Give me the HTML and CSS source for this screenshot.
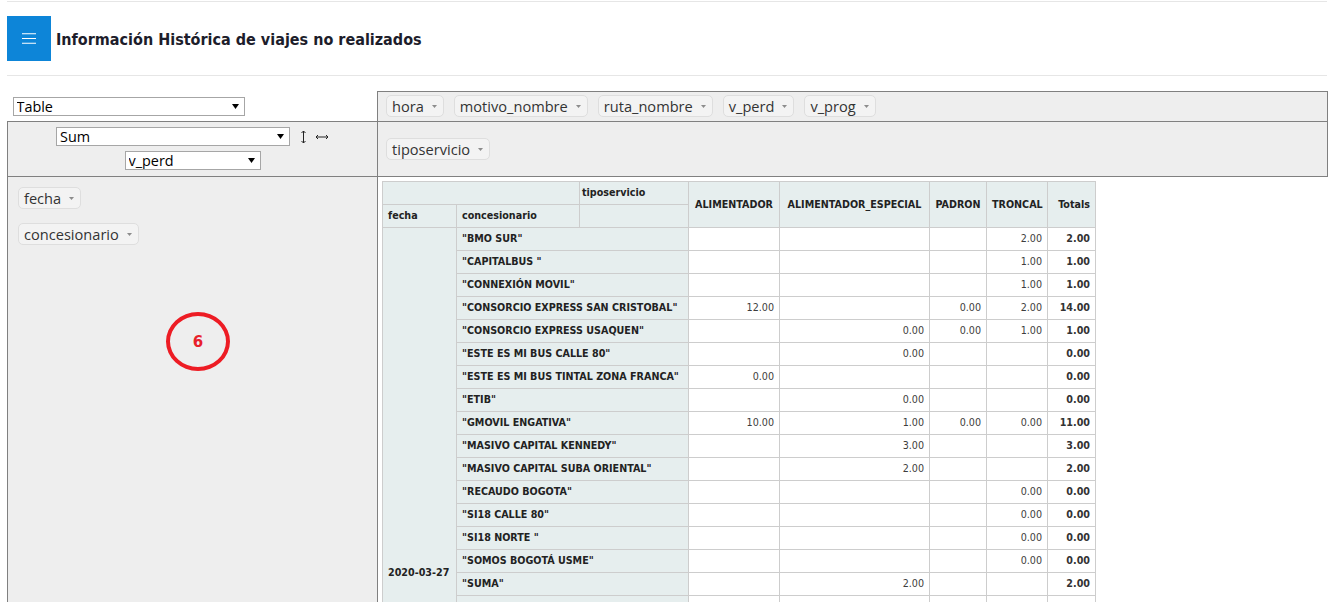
FILE: index.html
```html
<!DOCTYPE html>
<html lang="es">
<head>
<meta charset="utf-8">
<title>Información Histórica de viajes no realizados</title>
<link rel="stylesheet" href="styles.css">
</head>
<body>
<div class="page">
  <div class="rule rule-top"></div>
  <header class="head">
    <button class="menu-btn" type="button" aria-label="Menú">
      <svg width="14" height="11" viewBox="0 0 14 11"><path d="M0 0.75H14M0 5.5H14M0 10.25H14" stroke="#fff" stroke-width="1.2"/></svg>
    </button>
    <h1 class="title">Información Histórica de viajes no realizados</h1>
  </header>
  <div class="rule rule-mid"></div>

  <table class="pvtUi">
    <colgroup><col class="ui-c1"><col class="ui-c2"></colgroup>
    <tr class="ui-r1">
      <td class="pvtRenderer">
        <div class="sel sel-renderer"><select><option>Table</option></select><svg class="sel-arrow" viewBox="0 0 7 5"><path d="M0 0H7L3.5 5Z"/></svg></div>
      </td>
      <td class="axis pvtUnused">
        <ul class="chips horiz">
          <li class="chip">hora<svg class="tri" viewBox="0 0 5 3"><path d="M0 0H5L2.5 3Z"/></svg></li>
          <li class="chip">motivo_nombre<svg class="tri" viewBox="0 0 5 3"><path d="M0 0H5L2.5 3Z"/></svg></li>
          <li class="chip">ruta_nombre<svg class="tri" viewBox="0 0 5 3"><path d="M0 0H5L2.5 3Z"/></svg></li>
          <li class="chip">v_perd<svg class="tri" viewBox="0 0 5 3"><path d="M0 0H5L2.5 3Z"/></svg></li>
          <li class="chip">v_prog<svg class="tri" viewBox="0 0 5 3"><path d="M0 0H5L2.5 3Z"/></svg></li>
        </ul>
      </td>
    </tr>
    <tr class="ui-r2">
      <td class="axis pvtVals">
        <div class="vals">
          <div class="vals-line">
            <div class="sel sel-agg"><select><option>Sum</option></select><svg class="sel-arrow" viewBox="0 0 7 5"><path d="M0 0H7L3.5 5Z"/></svg></div>
            <svg class="order order-row" width="5" height="14" viewBox="0 0 5 14"><path d="M2.5 1V13M0.5 3L2.5 1L4.5 3M0.5 11L2.5 13L4.5 11" fill="none" stroke="#222" stroke-width="1"/></svg>
            <svg class="order order-col" width="14" height="6" viewBox="0 0 14 6"><path d="M1 3H13M3 1L1 3L3 5M11 1L13 3L11 5" fill="none" stroke="#222" stroke-width="1"/></svg>
          </div>
          <div class="sel sel-attr"><select><option>v_perd</option></select><svg class="sel-arrow" viewBox="0 0 7 5"><path d="M0 0H7L3.5 5Z"/></svg></div>
        </div>
      </td>
      <td class="axis pvtCols">
        <ul class="chips horiz">
          <li class="chip">tiposervicio<svg class="tri" viewBox="0 0 5 3"><path d="M0 0H5L2.5 3Z"/></svg></li>
        </ul>
      </td>
    </tr>
    <tr class="ui-r3">
      <td class="axis pvtRows">
        <div class="rows-inner">
          <ul class="chips vert">
            <li class="chip">fecha<svg class="tri" viewBox="0 0 5 3"><path d="M0 0H5L2.5 3Z"/></svg></li>
            <li class="chip">concesionario<svg class="tri" viewBox="0 0 5 3"><path d="M0 0H5L2.5 3Z"/></svg></li>
          </ul>
          <div class="mark">6</div>
        </div>
      </td>
      <td class="pvtRendererArea">
        <table class="pvtTable">
          <colgroup>
            <col class="k1"><col class="k2"><col class="k3"><col class="k4"><col class="k5"><col class="k6"><col class="k7"><col class="k8">
          </colgroup>
          <thead>
            <tr>
              <th colspan="2"></th>
              <th class="pvtAxisLabel lbl-ts">tiposervicio</th>
              <th class="pvtColLabel" rowspan="2">ALIMENTADOR</th>
              <th class="pvtColLabel" rowspan="2">ALIMENTADOR_ESPECIAL</th>
              <th class="pvtColLabel" rowspan="2">PADRON</th>
              <th class="pvtColLabel" rowspan="2">TRONCAL</th>
              <th class="pvtTotalLabel" rowspan="2">Totals</th>
            </tr>
            <tr>
              <th class="pvtAxisLabel">fecha</th>
              <th class="pvtAxisLabel">concesionario</th>
              <th></th>
            </tr>
          </thead>
          <tbody>
            <tr><th class="pvtRowLabel date" rowspan="17">2020-03-27</th><th class="pvtRowLabel" colspan="2">"BMO SUR"</th><td></td><td></td><td></td><td>2.00</td><td class="pvtTotal">2.00</td></tr>
            <tr><th class="pvtRowLabel" colspan="2">"CAPITALBUS "</th><td></td><td></td><td></td><td>1.00</td><td class="pvtTotal">1.00</td></tr>
            <tr><th class="pvtRowLabel" colspan="2">"CONNEXIÓN MOVIL"</th><td></td><td></td><td></td><td>1.00</td><td class="pvtTotal">1.00</td></tr>
            <tr><th class="pvtRowLabel" colspan="2">"CONSORCIO EXPRESS SAN CRISTOBAL"</th><td>12.00</td><td></td><td>0.00</td><td>2.00</td><td class="pvtTotal">14.00</td></tr>
            <tr><th class="pvtRowLabel" colspan="2">"CONSORCIO EXPRESS USAQUEN"</th><td></td><td>0.00</td><td>0.00</td><td>1.00</td><td class="pvtTotal">1.00</td></tr>
            <tr><th class="pvtRowLabel" colspan="2">"ESTE ES MI BUS CALLE 80"</th><td></td><td>0.00</td><td></td><td></td><td class="pvtTotal">0.00</td></tr>
            <tr><th class="pvtRowLabel" colspan="2">"ESTE ES MI BUS TINTAL ZONA FRANCA"</th><td>0.00</td><td></td><td></td><td></td><td class="pvtTotal">0.00</td></tr>
            <tr><th class="pvtRowLabel" colspan="2">"ETIB"</th><td></td><td>0.00</td><td></td><td></td><td class="pvtTotal">0.00</td></tr>
            <tr><th class="pvtRowLabel" colspan="2">"GMOVIL ENGATIVA"</th><td>10.00</td><td>1.00</td><td>0.00</td><td>0.00</td><td class="pvtTotal">11.00</td></tr>
            <tr><th class="pvtRowLabel" colspan="2">"MASIVO CAPITAL KENNEDY"</th><td></td><td>3.00</td><td></td><td></td><td class="pvtTotal">3.00</td></tr>
            <tr><th class="pvtRowLabel" colspan="2">"MASIVO CAPITAL SUBA ORIENTAL"</th><td></td><td>2.00</td><td></td><td></td><td class="pvtTotal">2.00</td></tr>
            <tr><th class="pvtRowLabel" colspan="2">"RECAUDO BOGOTA"</th><td></td><td></td><td></td><td>0.00</td><td class="pvtTotal">0.00</td></tr>
            <tr><th class="pvtRowLabel" colspan="2">"SI18 CALLE 80"</th><td></td><td></td><td></td><td>0.00</td><td class="pvtTotal">0.00</td></tr>
            <tr><th class="pvtRowLabel" colspan="2">"SI18 NORTE "</th><td></td><td></td><td></td><td>0.00</td><td class="pvtTotal">0.00</td></tr>
            <tr><th class="pvtRowLabel" colspan="2">"SOMOS BOGOTÁ USME"</th><td></td><td></td><td></td><td>0.00</td><td class="pvtTotal">0.00</td></tr>
            <tr><th class="pvtRowLabel" colspan="2">"SUMA"</th><td></td><td>2.00</td><td></td><td></td><td class="pvtTotal">2.00</td></tr>
            <tr><th class="pvtRowLabel" colspan="2">&nbsp;</th><td></td><td></td><td></td><td></td><td class="pvtTotal"></td></tr>
          </tbody>
        </table>
      </td>
    </tr>
  </table>
</div>
</body>
</html>
```

FILE: styles.css
```css
* { box-sizing: border-box; }
html, body { margin: 0; padding: 0; background: #fff; }
body { font-family: "Open Sans", "DejaVu Sans", sans-serif; color: #333; }

.page { width: 1327px; padding-left: 7px; }

.rule { height: 1px; background: #e6e6e6; }
.rule-top { margin-top: 1px; }
.rule-mid { margin-top: 14px; }

.head { display: flex; align-items: center; margin-top: 14px; height: 45px; }
.menu-btn {
  width: 44px; height: 45px; padding: 0; border: 0;
  background: #0d85d8;
  display: flex; align-items: center; justify-content: center;
}
.title {
  margin: 1px 0 0 5px;
  font-family: "DejaVu Sans Condensed", "DejaVu Sans", sans-serif;
  font-stretch: condensed;
  font-weight: bold; font-size: 16px;
  color: #1d1d2b;
}

/* pivot UI */
.pvtUi { margin-top: 15px; border-collapse: collapse; table-layout: fixed; width: 1320px; color: #333; }
.ui-c1 { width: 370px; }
.ui-c2 { width: 950px; }
.pvtUi > tbody > tr > td { padding: 0; vertical-align: top; }
.axis { border: 1px solid gray; background: #eee; }

.ui-r1 > td { height: 30px; }
.pvtRenderer { padding: 0 0 0 5px !important; vertical-align: middle !important; }
.pvtUnused { padding: 3px 8px 0 !important; }

.ui-r2 > td { height: 55px; }
.pvtVals { padding: 5px 0 0 !important; }
.pvtCols { padding: 16px 8px 0 !important; }

.pvtRows { padding: 10px 10px 0 !important; }
.rows-inner { position: relative; height: 430px; }

.chips { list-style: none; margin: 0; padding: 0; display: flex; }
.chips.horiz { gap: 10px; }
.chips.vert { flex-direction: column; align-items: flex-start; gap: 14px; }
.chip {
  display: inline-flex; align-items: center;
  height: 22px; padding: 0 6px 0 5px;
  background: #f3f3f3; border: 1px solid #dedede; border-radius: 5px;
  font-size: 14.6px; line-height: 16px; color: #333; white-space: nowrap;
}
.tri { width: 5px; height: 3px; margin-left: 8px; fill: #8c8c8c; }

/* selects */
.sel {
  display: inline-flex; align-items: center;
  height: 19px; border: 1px solid #a6a6a6; background: #fff;
}
.sel select {
  -webkit-appearance: none; appearance: none;
  border: 0; background: transparent; outline: none;
  flex: 1; min-width: 0; height: 17px; padding: 0 0 0 3px; margin: 0;
  font-family: "Open Sans", sans-serif; font-size: 14.4px; line-height: 17px; color: #000;
}
.sel-arrow { width: 7px; height: 5px; margin-right: 5px; fill: #000; flex: none; }
.sel-renderer { width: 232px; }
.sel-agg { width: 234px; }
.sel-attr { width: 136px; }

.vals { display: flex; flex-direction: column; align-items: center; gap: 5px; }
.vals-line { display: flex; align-items: center; gap: 10px; }
.order-row { margin-top: 1px; margin-left: 1px; }
.order-col { margin-left: -1px; margin-top: 1px; }

/* annotation */
.mark {
  position: absolute; left: 148px; top: 125px;
  width: 64px; height: 59px;
  border: 4px solid #ed1c24; border-radius: 50%;
  display: flex; align-items: center; justify-content: center;
  font-family: "DejaVu Sans", sans-serif; font-weight: bold; font-size: 15px; color: #e8202a;
}

/* renderer area / pivot table */
.pvtRendererArea { padding: 4px 0 0 4px !important; }
.pvtTable {
  border-collapse: collapse; table-layout: fixed; width: 713px;
  font-family: "DejaVu Sans Condensed", "DejaVu Sans", sans-serif;
  font-stretch: condensed;
  font-size: 8pt; line-height: 12px; text-align: left;
}
.k1 { width: 74px; } .k2 { width: 123px; } .k3 { width: 109px; } .k4 { width: 91px; }
.k5 { width: 150px; } .k6 { width: 57px; } .k7 { width: 61px; } .k8 { width: 48px; }
.pvtTable th {
  background: #e6eeee; border: 1px solid #cdcdcd; padding: 5px;
  font-weight: bold; color: #222; white-space: nowrap; overflow: hidden;
}
.pvtTable .pvtColLabel { text-align: center; }
.pvtTable .pvtTotalLabel { text-align: right; }
.pvtTable .lbl-ts { padding-left: 2px; vertical-align: top; }
.pvtTable td {
  background: #fff; border: 1px solid #cdcdcd; padding: 5px;
  color: #3d3d3d; text-align: right; vertical-align: top; white-space: nowrap;
}
.pvtTable td.pvtTotal { font-weight: bold; color: #333; }
.pvtTable .date { vertical-align: bottom; padding-bottom: 39px; }
```
